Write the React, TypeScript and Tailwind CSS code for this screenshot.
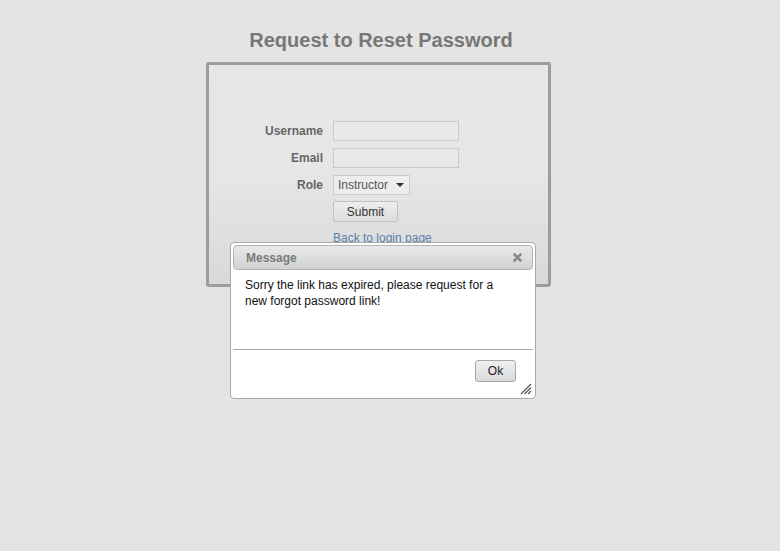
import React from "react";

export default function App() {
  const font = { fontFamily: '"Liberation Sans", Arial, sans-serif' };
  return (
    <div className="relative w-[780px] h-[551px] bg-[#e4e4e4] overflow-hidden" style={font}>
      <div className="ml-[206px] w-[345px] pt-[28px] flex flex-col">
        <h1 className="text-center text-[20px] leading-[24px] font-bold text-[#777777] pl-[5px]">
          Request to Reset Password
        </h1>
        <div className="mt-[10px] h-[225px] border-[3px] border-[#9c9c9c] rounded-[3px] bg-gradient-to-b from-[#e7e7e7] via-[#e6e6e6] to-[#d9d9d9] pt-[56px]">
          <div className="grid grid-cols-[114px_auto] gap-x-[10px] gap-y-[7px] items-center text-[12px]">
            <label className="text-right font-bold text-[#666666]">Username</label>
            <div className="w-[126px] h-[20px] border border-[#c9c9c9] bg-[#e9e9e9]" />
            <label className="text-right font-bold text-[#666666]">Email</label>
            <div className="w-[126px] h-[20px] border border-[#c9c9c9] bg-[#e9e9e9]" />
            <label className="text-right font-bold text-[#666666]">Role</label>
            <div className="w-[77px] h-[20px] border border-[#cbcbcb] bg-[#ededed] flex items-center justify-between pl-[4px] pr-[5px] text-[#555555]">
              <span>Instructor</span>
              <svg width="8" height="4" viewBox="0 0 8 4">
                <path d="M0 0 L8 0 L4 4 Z" fill="#333" />
              </svg>
            </div>
            <div />
            <button className="w-[65px] h-[21px] border border-[#c2c2c2] rounded-[2px] bg-gradient-to-b from-[#eeeeee] to-[#dddddd] text-[#333333] text-[12px] leading-none -mt-[1px]">
              Submit
            </button>
            <div />
            <a className="text-[#5b7ea6] underline leading-[16px] mt-[1px]" href="#">
              Back to login page
            </a>
          </div>
        </div>
      </div>

      <div className="absolute left-[230px] top-[242px] w-[306px] h-[157px] bg-white border border-[#a9a9a9] rounded-[4px] p-[2px] flex flex-col">
        <div className="h-[25px] border border-[#b4b4b4] rounded-[4px] bg-gradient-to-b from-[#e9e9e9] to-[#d2d2d2] flex items-center justify-between pl-[12px] pr-[10px]">
          <span className="text-[12px] font-bold text-[#7a7a7a]">Message</span>
          <svg width="9" height="9" viewBox="0 0 9 9">
            <path d="M1.5 1.5 L7.5 7.5 M7.5 1.5 L1.5 7.5" stroke="#8a8a8a" strokeWidth="2.6" strokeLinecap="round" />
          </svg>
        </div>
        <div className="h-[79px] pl-[12px] pt-[7px] text-[12px] leading-[16px] text-[#111111]">
          <p className="w-[262px]">Sorry the link has expired, please request for a new forgot password link!</p>
        </div>
        <div className="border-t border-[#a9a9a9] flex-1 relative flex justify-end pt-[10px] pr-[17px]">
          <button className="w-[41px] h-[22px] border border-[#a8a8a8] rounded-[3px] bg-gradient-to-b from-[#f0f0f0] to-[#dadada] text-[12px] text-[#222222] leading-none">
            Ok
          </button>
          <svg className="absolute right-[1px] bottom-[1px]" width="12" height="12" viewBox="0 0 12 12">
            <path d="M11 1 L1 11 M11 4.5 L4.5 11 M11 8 L8 11" stroke="#555" strokeWidth="1.2" />
          </svg>
        </div>
      </div>
    </div>
  );
}
